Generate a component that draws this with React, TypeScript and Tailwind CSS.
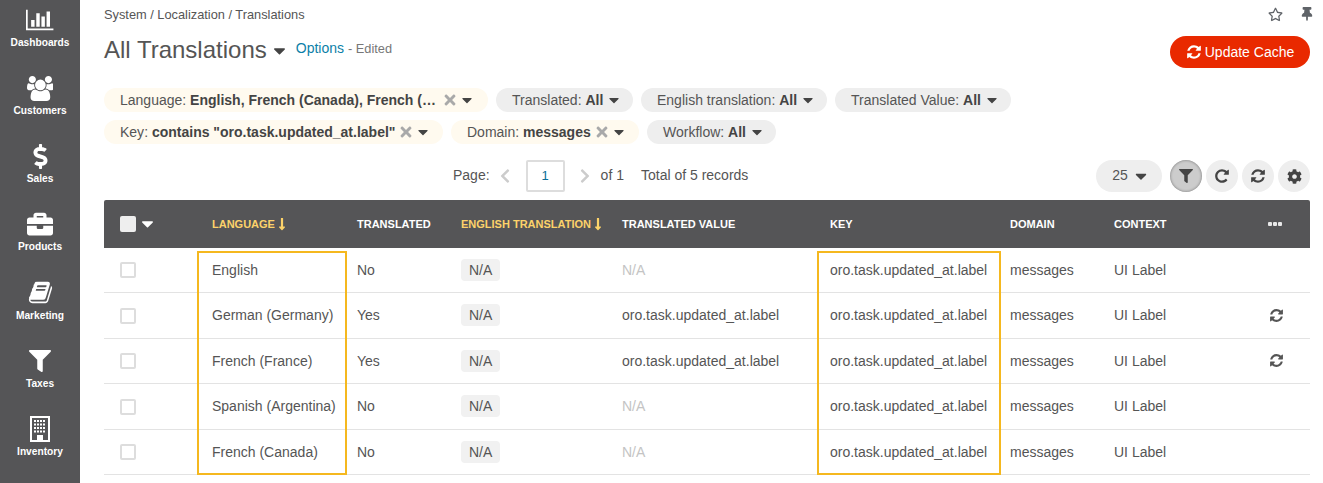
import React from "react";
import { FaDollarSign, FaBriefcase, FaFilter, FaRegStar, FaThumbtack, FaCog, FaTimes, FaCaretDown, FaChevronLeft, FaChevronRight, FaLongArrowAltDown } from "react-icons/fa";

const Fa = ({ d, w = 1792, h = 1792, size, className }: { d: string; w?: number; h?: number; size: number; className?: string }) => (
  <svg width={(size * w) / h} height={size} viewBox={`0 0 ${w} ${h}`} fill="currentColor" className={className}>
    <path d={d} />
  </svg>
);

const REFRESH = "M1639 1056q0 5-1 7-64 268-268 434.5t-478 166.5q-146 0-282.5-55t-243.5-157l-129 129q-19 19-45 19t-45-19-19-45v-448q0-26 19-45t45-19h448q26 0 45 19t19 45-19 45l-137 137q71 66 161 102t187 36q134 0 250-65t186-179q11-17 53-117 8-23 30-23h192q13 0 22.5 9.5t9.5 22.5zm25-800v448q0 26-19 45t-45 19h-448q-26 0-45-19t-19-45 19-45l138-138q-148-137-349-137-134 0-250 65t-186 179q-11 17-53 117-8 23-30 23h-199q-13 0-22.5-9.5t-9.5-22.5v-7q65-268 270-434.5t480-166.5q146 0 284 55.5t245 156.5l130-129q19-19 45-19t45 19 19 45z";
const REPEAT = "M1664 256v448q0 26-19 45t-45 19h-448q-42 0-59-40-17-39 14-69l138-138q-148-137-349-137-104 0-198.5 40.5t-163.5 109.5-109.5 163.5-40.5 198.5 40.5 198.5 109.5 163.5 163.5 109.5 198.5 40.5q119 0 225-52t179-147q7-10 23-12 15 0 25 9l137 138q9 8 9.5 20.5t-7.5 22.5q-109 132-264 204.5t-327 72.5q-156 0-298-61t-245-164-164-245-61-298 61-298 164-245 245-164 298-61q147 0 284.5 55.5t244.5 156.5l130-129q29-31 70-14 39 17 39 59z";
const BARS = "M640 896v512h-256v-512h256zm384-512v1024h-256v-1024h256zm1024 1152v128h-2048v-1536h128v1408h1920zm-640-896v768h-256v-768h256zm384-384v1152h-256v-1152h256z";
const USERS = "M593 896q-162 5-265 128h-134q-82 0-138-40.5t-56-118.5q0-353 124-353 6 0 43.5 21t97.5 42.5 119 21.5q67 0 133-23-5 37-5 66 0 139 81 256zm1071 637q0 120-73 189.5t-194 69.5h-874q-121 0-194-69.5t-73-189.5q0-53 3.5-103.5t14-109 26.5-108.5 43-97.5 62-81 85.5-53.5 111.5-20q10 0 43 21.5t73 48 107 48 135 21.5 135-21.5 107-48 73-48 43-21.5q61 0 111.5 20t85.5 53.5 62 81 43 97.5 26.5 108.5 14 109 3.5 103.5zm-1024-1277q0 106-75 181t-181 75-181-75-75-181 75-181 181-75 181 75 75 181zm704 384q0 159-112.5 271.5t-271.5 112.5-271.5-112.5-112.5-271.5 112.5-271.5 271.5-112.5 271.5 112.5 112.5 271.5zm576 225q0 78-56 118.5t-138 40.5h-134q-103-123-265-128 81-117 81-256 0-29-5-66 66 23 133 23 59 0 119-21.5t97.5-42.5 43.5-21q124 0 124 353zm-128-609q0 106-75 181t-181 75-181-75-75-181 75-181 181-75 181 75 75 181z";
const BOOK = "M1703 478q40 57 18 129l-275 906q-19 64-76.5 107.5t-122.5 43.5h-923q-77 0-148.5-53.5t-99.5-131.5q-24-67-2-127 0-4 3-27t4-37q1-8-3-21.5t-3-19.5q2-11 8-21t16.5-23.5 16.5-23.5q23-38 45-91.5t30-91.5q3-10 .5-30t-.5-28q3-11 17-28t17-23q21-36 42-92t25-90q1-9-2.5-32t.5-28q4-13 22-30.5t22-22.5q19-26 42.5-84.5t27.5-96.5q1-8-3-25.5t-2-26.5q2-8 9-18t18-23 17-21q8-12 16.5-30.5t15-35 16-36 19.5-32 26.5-23.5 36-11.5 47.5 5.5l-1 3q38-9 51-9h761q74 0 114 56t18 130l-274 906q-36 119-71.5 153.5t-128.5 34.5h-869q-27 0-38 15-11 16-1 43 24 70 144 70h923q29 0 56-15.5t35-41.5l300-987q7-22 5-57 38 15 59 43zm-1064 2q-4 13 2 22.5t20 9.5h608q13 0 25.5-9.5t16.5-22.5l21-64q4-13-2-22.5t-20-9.5h-608q-13 0-25.5 9.5t-16.5 22.5zm-83 256q-4 13 2 22.5t20 9.5h608q13 0 25.5-9.5t16.5-22.5l21-64q4-13-2-22.5t-20-9.5h-608q-13 0-25.5 9.5t-16.5 22.5z";

const BuildingIcon = () => (
  <svg width="20" height="26" viewBox="0 0 20 26" fill="currentColor">
    <path d="M0 0h20v26H0z M2 2v22h5v-5h6v5h5V2z" fillRule="evenodd" />
    {[4, 7.5, 11, 14.5].map((y) =>
      [4, 7, 10, 13].map((x) => <rect key={`${x}-${y}`} x={x} y={y} width="2" height="2" />)
    )}
  </svg>
);

const nav = [
  { label: "Dashboards", icon: <Fa d={BARS} w={2048} size={24} /> },
  { label: "Customers", icon: <Fa d={USERS} w={1920} size={25} /> },
  { label: "Sales", icon: <FaDollarSign size={25} /> },
  { label: "Products", icon: <FaBriefcase size={26} /> },
  { label: "Marketing", icon: <Fa d={BOOK} size={25} /> },
  { label: "Taxes", icon: <FaFilter size={22} /> },
  { label: "Inventory", icon: <BuildingIcon /> },
];

const Pill = ({ label, value, active, x, w, wide }: { label: string; value: string; active?: boolean; x?: boolean; w: string; wide?: boolean }) => (
  <div className={`flex h-6 items-center rounded-full pl-4 text-[14px] text-[#555] ${active ? "bg-[#fffaef]" : "bg-[#eeeeee]"} ${w}`}>
    <span className="whitespace-nowrap">{label}:&nbsp;<b className="font-bold text-[#444]">{value}</b></span>
    {x && <FaTimes size={16} className={`shrink-0 text-[#a9a9a9] ${wide ? "ml-[6px]" : "ml-[3px]"}`} />}
    <FaCaretDown size={16} className={`shrink-0 text-[#444] ${x ? "ml-[1px]" : "ml-[3px]"}`} />
  </div>
);

const RoundBtn = ({ children, on }: { children: React.ReactNode; on?: boolean }) => (
  <div className={`flex h-8 w-8 items-center justify-center rounded-full text-[#444] ${on ? "bg-[#cccccc] shadow-[inset_0_0_3px_rgba(0,0,0,0.45)]" : "bg-[#eeeeee]"}`}>{children}</div>
);

const grid = "grid grid-cols-[93px_145px_104px_161px_208px_180px_104px_154px_57px]";

const rows = [
  { lang: "English", tr: "No", val: "", sync: false },
  { lang: "German (Germany)", tr: "Yes", val: "oro.task.updated_at.label", sync: true },
  { lang: "French (France)", tr: "Yes", val: "oro.task.updated_at.label", sync: true },
  { lang: "Spanish (Argentina)", tr: "No", val: "", sync: false },
  { lang: "French (Canada)", tr: "No", val: "", sync: false },
];

export default function App() {
  return (
    <div className="flex h-[483px] w-[1323px] overflow-hidden bg-white font-['Liberation_Sans',Arial,sans-serif] text-[14px] text-[#555]">
      <aside className="flex h-full w-20 shrink-0 flex-col overflow-hidden bg-[#555557] text-white">
        <div className="-mt-[17.3px] flex flex-col">
          {nav.map((n) => (
            <div key={n.label} className="flex h-[68.2px] shrink-0 flex-col items-center justify-end pb-[1px]">
              <div className="flex h-[30px] items-center justify-center">{n.icon}</div>
              <div className="mt-[1px] text-[10.2px] font-bold leading-[14px]">{n.label}</div>
            </div>
          ))}
        </div>
      </aside>
      <main className="relative flex-1 pl-6 pr-[13px]">
        <div className="flex h-[28px] items-center justify-between">
          <div className="pt-[1px] text-[12.8px] text-[#555]">System / Localization / Translations</div>
          <div className="-mr-[4px] flex items-center gap-[17px] text-[#5f6368]">
            <FaRegStar size={15} />
            <FaThumbtack size={14} />
          </div>
        </div>
        <div className="mt-2 flex h-8 items-start justify-between">
          <div className="-mt-[2px] flex items-center">
            <span className="text-[24px] leading-8 text-[#555]">All Translations</span>
            <FaCaretDown size={19} className="ml-[3px] text-[#444]" />
            <span className="-mt-[3px] ml-[7px] text-[14px] text-[#0c7fa8]">Options</span>
            <span className="-mt-[3px] ml-1 text-[12.8px] text-[#777]">- Edited</span>
          </div>
          <div className="flex h-8 w-[140px] items-center justify-center gap-[3px] rounded-full bg-[#e92900] text-[14px] text-white">
            <Fa d={REFRESH} size={16} />
            <span>Update Cache</span>
          </div>
        </div>
        <div className="mt-5 flex flex-col gap-2">
          <div className="flex gap-2">
            <Pill w="w-[384px]" active x wide label="Language" value="English, French (Canada), French (…" />
            <Pill w="w-[137px]" label="Translated" value="All" />
            <Pill w="w-[186px]" label="English translation" value="All" />
            <Pill w="w-[176px]" label="Translated Value" value="All" />
          </div>
          <div className="flex gap-2">
            <Pill w="w-[339px]" active x label="Key" value={'contains "oro.task.updated_at.label"'} />
            <Pill w="w-[188px]" active x label="Domain" value="messages" />
            <Pill w="w-[129px]" label="Workflow" value="All" />
          </div>
        </div>
        <div className="relative mt-4 flex h-8 items-center justify-end gap-1">
          <div className="absolute left-[349px] top-0 flex h-8 items-center">
            <span className="-mt-[2px]">Page:</span>
            <FaChevronLeft size={16} className="ml-[7px] text-[#cccccc]" />
            <div className="ml-[13px] flex h-8 w-[39px] items-center justify-center rounded-[2px] border-2 border-[#dddddd] text-[13px] text-[#0c6f96]">1</div>
            <FaChevronRight size={16} className="ml-[12px] text-[#cccccc]" />
            <span className="-mt-[2px] ml-[8px]">of 1</span>
            <span className="-mt-[2px] ml-[17px]">Total of 5 records</span>
          </div>
          <div className="mr-1 flex h-8 w-[66px] items-center justify-center gap-1 rounded-full bg-[#eeeeee] pl-1">
            <span className="-mt-[2px]">25</span>
            <FaCaretDown size={18} className="text-[#444]" />
          </div>
          <RoundBtn on><FaFilter size={14} /></RoundBtn>
          <RoundBtn><Fa d={REPEAT} size={16} /></RoundBtn>
          <RoundBtn><Fa d={REFRESH} size={16} /></RoundBtn>
          <RoundBtn><FaCog size={15} /></RoundBtn>
        </div>
        <div className="mt-2">
          <div className={`${grid} h-[47.5px] items-center rounded-t-[2px] bg-[#555557] text-[11px] font-bold uppercase text-white`}>
            <div className="flex items-center pl-4">
              <span className="h-4 w-4 rounded-[2px] bg-[#eeeeee]" />
              <FaCaretDown size={19} className="ml-[2px]" />
            </div>
            <div className="flex items-center pl-[15px] text-[#fcd26a]">Language<FaLongArrowAltDown size={14} className="ml-0" /></div>
            <div className="pl-[15px]">Translated</div>
            <div className="flex items-center pl-[15px] text-[#fcd26a]">English translation<FaLongArrowAltDown size={14} className="ml-0" /></div>
            <div className="pl-[15px]">Translated value</div>
            <div className="pl-[15px]">Key</div>
            <div className="pl-[15px]">Domain</div>
            <div className="pl-[15px]">Context</div>
            <div className="pl-[15px]">
              <svg width="15" height="4" viewBox="0 0 15 4" fill="#e8e8e8">
                <rect x="0" y="0" width="4" height="4" rx="1" />
                <rect x="5" y="0" width="4" height="4" rx="1" />
                <rect x="10" y="0" width="4" height="4" rx="1" />
              </svg>
            </div>
          </div>
          {rows.map((r) => (
            <div key={r.lang} className={`${grid} h-[45.5px] items-center border-b border-[#e3e3e3] pt-[0.5px]`}>
              <div className="pl-4"><div className="h-4 w-4 rounded-[2px] border-2 border-[#dddddd]" /></div>
              <div className="pl-[15px]">{r.lang}</div>
              <div className="pl-[15px]">{r.tr}</div>
              <div className="pl-[15px]"><span className="rounded-[4px] bg-[#f1f1f1] px-2 py-[3px]">N/A</span></div>
              <div className={`pl-[15px] ${r.val ? "" : "text-[#c4c4c4]"}`}>{r.val || "N/A"}</div>
              <div className="pl-[15px]">oro.task.updated_at.label</div>
              <div className="pl-[15px]">messages</div>
              <div className="pl-[15px]">UI Label</div>
              <div className="pl-[16px]">{r.sync && <Fa d={REFRESH} size={15} className="-mt-[1px]" />}</div>
            </div>
          ))}
        </div>
        <div className="absolute left-[117px] top-[251px] h-[224px] w-[150px] border-2 border-[#f5b81f]" />
        <div className="absolute left-[737px] top-[251px] h-[224px] w-[184px] border-2 border-[#f5b81f]" />
      </main>
    </div>
  );
}
